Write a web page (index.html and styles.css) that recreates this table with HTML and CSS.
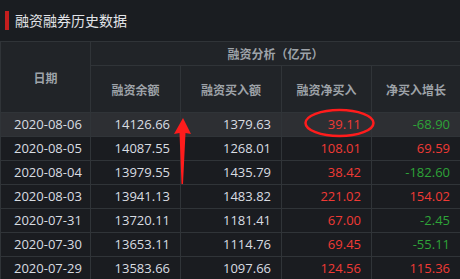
FILE: index.html
```html
<!DOCTYPE html>
<html lang="zh-CN">
<head>
<meta charset="utf-8">
<title>融资融券历史数据</title>
<link rel="stylesheet" href="styles.css">
</head>
<body>
<div class="panel">
  <div class="title-bar">
    <span class="mark"></span>
    <span class="title">融资融券历史数据</span>
  </div>
  <table class="grid">
    <colgroup>
      <col class="c1"><col class="c2"><col class="c3"><col class="c4"><col class="c5">
    </colgroup>
    <thead>
      <tr class="h1">
        <th rowspan="2">日期</th>
        <th colspan="4">融资分析（亿元）</th>
      </tr>
      <tr class="h2">
        <th>融资余额</th>
        <th>融资买入额</th>
        <th>融资净买入</th>
        <th>净买入增长</th>
      </tr>
    </thead>
    <tbody>
      <tr class="active"><td class="date">2020-08-06</td><td>14126.66</td><td>1379.63</td><td class="up">39.11</td><td class="down">-68.90</td></tr>
      <tr><td class="date">2020-08-05</td><td>14087.55</td><td>1268.01</td><td class="up">108.01</td><td class="up">69.59</td></tr>
      <tr><td class="date">2020-08-04</td><td>13979.55</td><td>1435.79</td><td class="up">38.42</td><td class="down">-182.60</td></tr>
      <tr><td class="date">2020-08-03</td><td>13941.13</td><td>1483.82</td><td class="up">221.02</td><td class="up">154.02</td></tr>
      <tr><td class="date">2020-07-31</td><td>13720.11</td><td>1181.41</td><td class="up">67.00</td><td class="down">-2.45</td></tr>
      <tr><td class="date">2020-07-30</td><td>13653.11</td><td>1114.76</td><td class="up">69.45</td><td class="down">-55.11</td></tr>
      <tr><td class="date">2020-07-29</td><td>13583.66</td><td>1097.66</td><td class="up">124.56</td><td class="up">115.36</td></tr>
    </tbody>
  </table>
  <svg class="annot" width="460" height="279" viewBox="0 0 460 279">
    <ellipse cx="339.5" cy="123" rx="34" ry="13" fill="none" stroke="#ff1c1c" stroke-width="2.5"/>
    <path d="M183 118 L191 134 L185.5 133 L183 184 L181.5 184 L179.5 133 L174 134 Z" fill="#ff1c1c"/>
  </svg>
</div>
</body>
</html>
```
FILE: styles.css
```css
html, body {
  margin: 0;
  padding: 0;
  background: #1a1c20;
}
.panel {
  position: relative;
  width: 460px;
  height: 279px;
  overflow: hidden;
  background: #1a1c20;
  font-family: "Open Sans", "Noto Sans CJK SC", sans-serif;
}
.title-bar {
  height: 41px;
  display: flex;
  align-items: center;
  gap: 6px;
  padding-left: 5px;
  background: #1a1d21;
  box-sizing: border-box;
}
.mark {
  width: 4px;
  height: 19px;
  background: #c41e1e;
}
.title {
  font-family: "Noto Sans CJK SC", sans-serif;
  font-size: 14px;
  color: #e2e4e8;
  line-height: 1;
  margin-top: -2px;
}
.grid {
  width: 460px;
  table-layout: fixed;
  border-collapse: collapse;
}
.c1 { width: 90px; }
.c2 { width: 90px; }
.c3 { width: 101px; }
.c4 { width: 90px; }
.c5 { width: 89px; }
.grid th {
  font-family: "Noto Sans CJK SC", sans-serif;
  font-size: 12px;
  font-weight: bold;
  color: #9ea3a9;
  background: #212428;
  border: 1px solid #303438;
  padding: 0;
  text-align: center;
}
.h1 th { height: 23px; }
.h2 th { height: 46px; }
.grid td {
  font-size: 13px;
  color: #d9dde2;
  height: 23px;
  padding: 0 10px 0 0;
  text-align: right;
  border: 1px solid #303438;
  line-height: 1;
}
.grid td.date {
  text-align: left;
  padding: 0 0 0 13px;
}
.grid tr.active td {
  background: #2d2f33;
}
.grid td.up { color: #f03a35; }
.grid td.down { color: #2ea338; }
.annot {
  position: absolute;
  left: 0;
  top: 0;
  pointer-events: none;
}
```
